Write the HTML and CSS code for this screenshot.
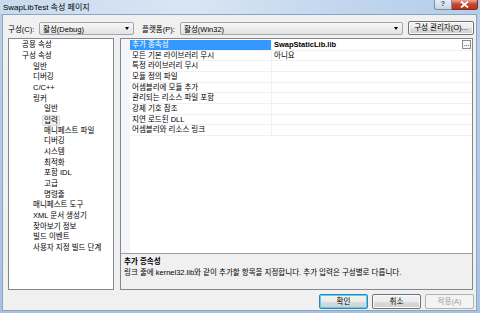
FILE: index.html
```html
<!DOCTYPE html>
<html lang="ko">
<head>
<meta charset="utf-8">
<link rel="stylesheet" href="styles.css">
</head>
<body>
<div class="window">
  <div class="titlebar">
    <span class="title">SwapLibTest 속성 페이지</span>
    <div class="caption">
      <span class="cap-help">?</span>
      <span class="cap-close"><svg width="9" height="7" viewBox="0 0 9 7"><path d="M1 0.5 L8 6.5 M8 0.5 L1 6.5" stroke="#fff" stroke-width="1.8"/></svg></span>
    </div>
  </div>
  <div class="client">
    <div class="toprow">
      <span class="lbl lbl-config">구성(C):</span>
      <div class="combo combo-config"><span>활성(Debug)</span><i class="arrow"></i></div>
      <span class="lbl lbl-platform">플랫폼(P):</span>
      <div class="combo combo-platform"><span>활성(Win32)</span><i class="arrow"></i></div>
      <button class="btn btn-mgr">구성 관리자(O)...</button>
    </div>
    <div class="main">
      <div class="tree">
        <div class="ti l0">공용 속성</div>
        <div class="ti l0">구성 속성</div>
        <div class="ti l1">일반</div>
        <div class="ti l1">디버깅</div>
        <div class="ti l1">C/C++</div>
        <div class="ti l1">링커</div>
        <div class="ti l2">일반</div>
        <div class="ti l2"><span class="sel">입력</span></div>
        <div class="ti l2">매니페스트 파일</div>
        <div class="ti l2">디버깅</div>
        <div class="ti l2">시스템</div>
        <div class="ti l2">최적화</div>
        <div class="ti l2">포함 IDL</div>
        <div class="ti l2">고급</div>
        <div class="ti l2">명령줄</div>
        <div class="ti l1">매니페스트 도구</div>
        <div class="ti l1">XML 문서 생성기</div>
        <div class="ti l1">찾아보기 정보</div>
        <div class="ti l1">빌드 이벤트</div>
        <div class="ti l1">사용자 지정 빌드 단계</div>
      </div>
      <div class="props">
        <div class="grid">
          <div class="row active"><div class="name">추가 종속성</div><div class="val bold">SwapStaticLib.lib<span class="dots">...</span></div></div>
          <div class="row"><div class="name">모든 기본 라이브러리 무시</div><div class="val">아니요</div></div>
          <div class="row"><div class="name">특정 라이브러리 무시</div><div class="val"></div></div>
          <div class="row"><div class="name">모듈 정의 파일</div><div class="val"></div></div>
          <div class="row"><div class="name">어셈블리에 모듈 추가</div><div class="val"></div></div>
          <div class="row"><div class="name">관리되는 리소스 파일 포함</div><div class="val"></div></div>
          <div class="row"><div class="name">강제 기호 참조</div><div class="val"></div></div>
          <div class="row"><div class="name">지연 로드된 DLL</div><div class="val"></div></div>
          <div class="row"><div class="name">어셈블리와 리소스 링크</div><div class="val"></div></div>
        </div>
        <div class="desc">
          <div class="desc-title">추가 종속성</div>
          <div class="desc-text">링크 줄에 kernel32.lib와 같이 추가할 항목을 지정합니다. 추가 입력은 구성별로 다릅니다.</div>
        </div>
      </div>
    </div>
    <div class="buttons">
      <button class="btn btn-ok">확인</button>
      <button class="btn">취소</button>
      <button class="btn disabled">적용(A)</button>
    </div>
  </div>
</div>
</body>
</html>
```

FILE: styles.css
```css
* { box-sizing: border-box; }
html, body { margin: 0; padding: 0; }
body {
  width: 480px; height: 313px; overflow: hidden;
  font-family: "Liberation Sans", "Noto Sans CJK KR", sans-serif;
  font-size: 7.5px; color: #000;
}
.window {
  width: 480px; height: 313px;
  background: linear-gradient(to bottom, #c9dbf0 0px, #b9cfe9 14px, #a9c3e4 100%);
  display: flex; flex-direction: column;
  padding: 0 3px 2px 2px;
}
.titlebar {
  height: 14px; flex: none;
  display: flex; align-items: flex-start;
  background: linear-gradient(to right, #c8daef, #d8e6f4 40%, #c2d6ee 70%, #b5cde9);
  margin: 0 -3px 0 -2px; padding-left: 3px;
}
.title { font-size: 8px; line-height: 8px; margin-top: 4px; color: #000; }
.caption { margin-left: auto; display: flex; margin-right: 2px; }
.cap-help {
  width: 18px; height: 10px; border: 1px solid #7d8fa8; border-top: none;
  border-radius: 0 0 0 3px;
  background: linear-gradient(#e8eef6, #c9d5e5);
  font-size: 7px; line-height: 8px; text-align: center; color: #45556c; font-weight: bold;
}
.cap-close {
  width: 26px; height: 10px; border: 1px solid #7a2f22; border-top: none; border-left: none;
  border-radius: 0 0 3px 0;
  background: linear-gradient(#e8a593, #c7432a 50%, #b83419);
  display: flex; align-items: center; justify-content: center;
}
.client {
  flex: 1; background: #f0f0f0;
  border: 1px solid #8ca4c4;
  display: flex; flex-direction: column;
  padding: 0 0 0 5px;
}
.toprow {
  display: flex; align-items: center;
  height: 20px; margin-top: 3px; flex: none;
}
.lbl { white-space: nowrap; }
.lbl-config { width: 31px; }
.lbl-platform { width: 38px; margin-left: 8px; }
.combo {
  height: 13px; border: 1px solid #a6a6a6; border-radius: 2px;
  background: linear-gradient(#f6f6f6, #e3e3e3);
  display: flex; align-items: center; padding-left: 3px;
}
.combo-config { width: 95px; }
.combo-platform { width: 223px; }
.combo .arrow {
  margin-left: auto; margin-right: 4px;
  width: 0; height: 0;
  border-left: 2.5px solid transparent; border-right: 2.5px solid transparent;
  border-top: 3px solid #000;
}
.btn {
  font-family: inherit; font-size: 7.5px; color: #000;
  height: 14px; padding: 0;
  border: 1px solid #707070; border-radius: 2px;
  background: linear-gradient(#f2f2f2 0%, #ebebeb 50%, #dddddd 51%, #cfcfcf 100%);
  box-shadow: inset 0 0 0 1px #fbfbfb;
  line-height: 10px;
}
.btn-mgr { width: 66px; margin-left: 5px; }
.main {
  display: flex; height: 252px; flex: none;
}
.tree {
  width: 106px; height: 252px; background: #fff;
  border: 1px solid #828790;
  padding-top: 1.3px;
}
.ti { height: 10.68px; line-height: 10.68px; white-space: nowrap; color: #000; }
.l0 { padding-left: 13px; }
.l1 { padding-left: 24px; }
.l2 { padding-left: 35px; }
.sel {
  display: inline-block; line-height: 9px; height: 11px;
  border: 1px solid #d9d9d9; background: #f0f0f0; border-radius: 2px;
  padding: 0 1px; margin-left: -2px;
}
.props {
  width: 353px; margin-left: 6px; height: 252px;
  border: 1px solid #828790;
  display: flex; flex-direction: column;
  background: #fff;
}
.grid {
  flex: 1; padding-top: 1px;
  border-left: 9px solid #f4f4fb;
}
.row {
  display: flex; height: 10.68px; line-height: 10px;
  border-bottom: 1px solid #f0f0f7;
}
.name { width: 142px; padding-left: 2px; white-space: nowrap; border-right: 1px solid #f0f0f7; }
.val { flex: 1; padding-left: 2px; position: relative; }
.row.active .name { background: #3399ff; color: #fff; }
.bold { font-weight: bold; }
.dots {
  position: absolute; right: 1px; top: 0px;
  width: 9px; height: 9px; border: 1px solid #8a8a8a; background: #f6f6f6;
  font-weight: normal; font-size: 7px; line-height: 6px; text-align: center;
}
.desc {
  height: 36px; background: #f0f0f0;
  border-top: 1px solid #a0a0a0;
  padding: 3px 0 0 3px;
}
.desc-title { font-weight: bold; line-height: 10px; }
.desc-text { line-height: 11px; }
.buttons {
  display: flex; justify-content: flex-end;
  margin-top: 4px; padding-right: 2px; gap: 4px; flex: none;
}
.buttons .btn { width: 49px; height: 15px; }
.btn-ok { border-color: #3c7fb1; box-shadow: inset 0 0 0 1px #48d7f7; }
.btn.disabled { color: #a0a0a0; border-color: #adb2b5; background: #f4f4f4; box-shadow: none; }
```
